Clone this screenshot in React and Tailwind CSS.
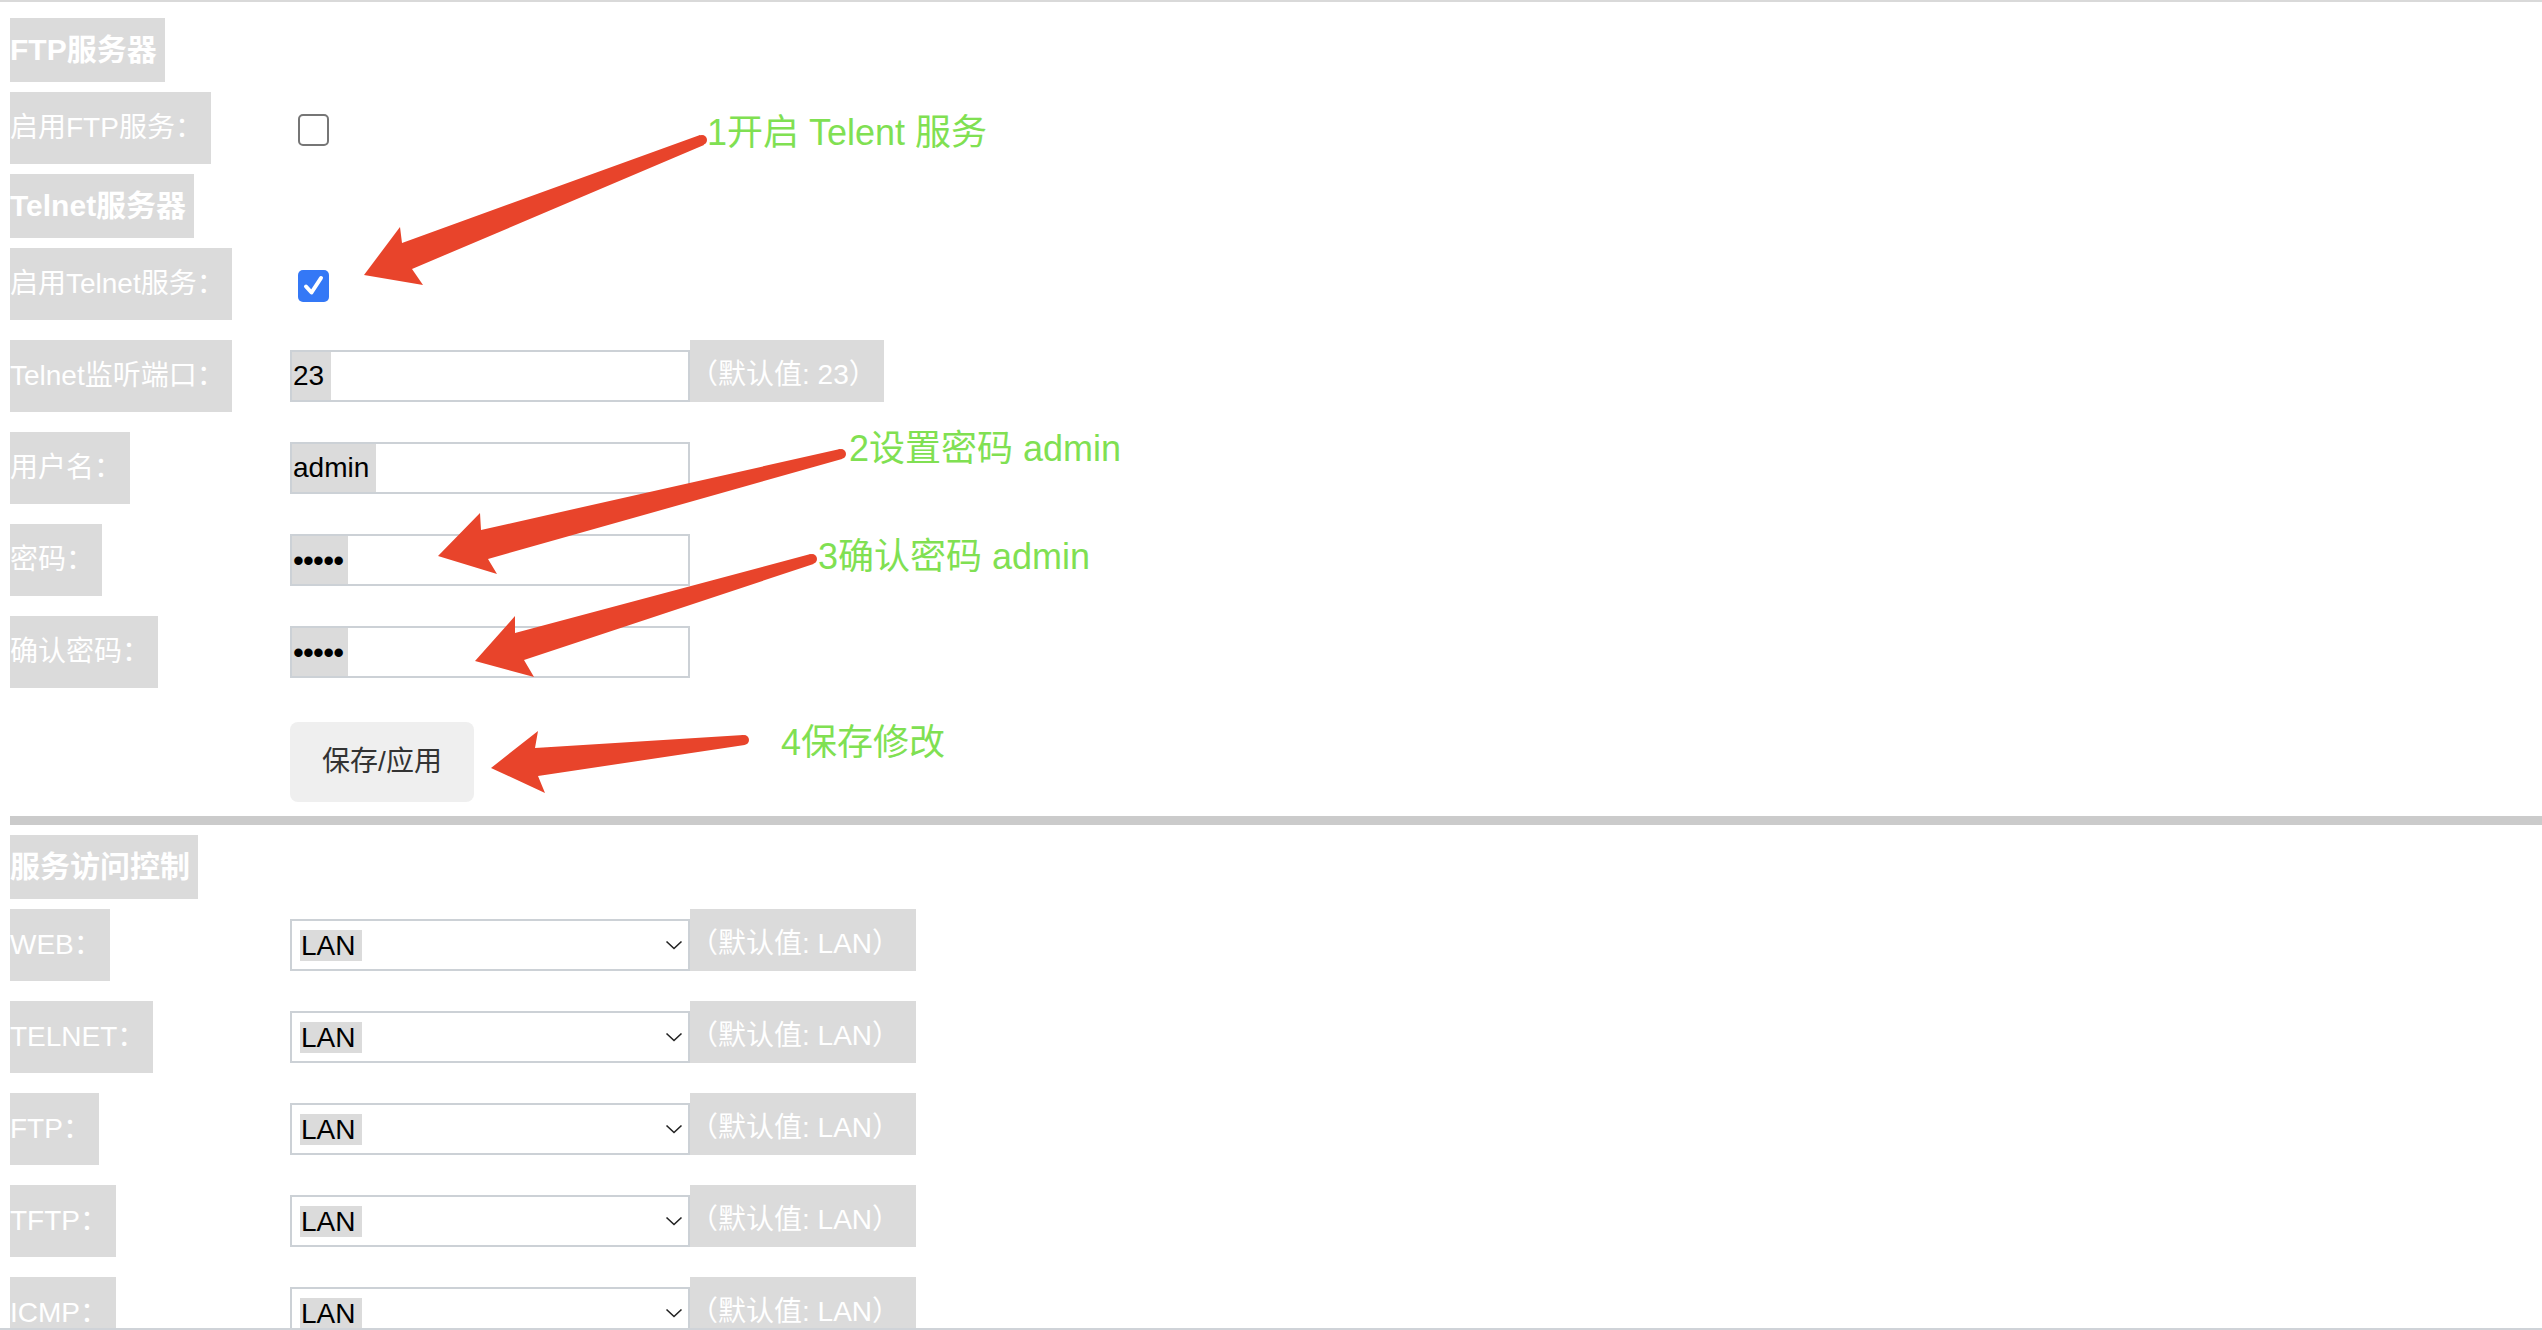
import React from "react";

// 页面字体：拉丁字母用 Liberation Sans，中文用 Noto Sans CJK SC
const FONT = "font-['Liberation_Sans','Noto_Sans_CJK_SC',sans-serif]";

function Tag({ className = "", children }) {
  return (
    <div className={`flex items-center bg-[#dbdbdb] text-white whitespace-nowrap overflow-hidden ${className}`}>
      {children}
    </div>
  );
}

function Header({ className = "", children }) {
  return (
    <Tag className={`h-[64px] text-[30px] font-bold leading-none ${className}`}>{children}</Tag>
  );
}

function Row({ label, labelW, className = "", children }) {
  return (
    <div className={`flex items-start ${className}`}>
      <div className="w-[280px] shrink-0">
        <Tag className={`h-[72px] text-[28px] leading-none ${labelW}`}>{label}</Tag>
      </div>
      {children}
    </div>
  );
}

function Checkbox({ checked }) {
  if (checked) {
    return (
      <div className="w-[31px] h-[32px] rounded-[5px] bg-[#3478f6] flex items-center justify-center">
        <svg width="31" height="32" viewBox="0 0 31 32">
          <polyline points="8,16.5 13.5,22.5 23,8" fill="none" stroke="white" strokeWidth="4" strokeLinecap="round" strokeLinejoin="round" />
        </svg>
      </div>
    );
  }
  return <div className="w-[31px] h-[32px] rounded-[5px] border-2 border-[#767676] bg-white" />;
}

function TextField({ value, valueW, hint, hintW, masked }) {
  return (
    <div className="h-[62px] flex items-end">
      <div className="w-[400px] h-[52px] border-2 border-[#ccd1d6] bg-white flex items-stretch">
        {masked ? (
          <span className={`bg-[#dbdbdb] text-black text-[31px] tracking-[-0.8px] leading-none flex items-center pl-[1px] ${valueW}`}>
            {value}
          </span>
        ) : (
          <span className={`bg-[#dbdbdb] text-black text-[28px] leading-none flex items-center pl-[1px] ${valueW}`}>
            {value}
          </span>
        )}
      </div>
      {hint && <Tag className={`h-[62px] pt-[8px] text-[28px] leading-none ${hintW}`}>{hint}</Tag>}
    </div>
  );
}

function SelectField() {
  return (
    <div className="flex items-end">
      <div className="w-[400px] h-[52px] border-2 border-[#ccd1d6] bg-white flex items-center justify-between pl-[8px] pr-[5px]">
        <span className="bg-[#dbdbdb] text-black text-[28px] leading-[31px] pl-[1px] w-[62px]">LAN</span>
        <svg width="18" height="10" viewBox="0 0 18 10">
          <polyline points="1.5,1.5 9,8.5 16.5,1.5" fill="none" stroke="#222" strokeWidth="1.6" />
        </svg>
      </div>
      <Tag className="h-[62px] pt-[8px] w-[226px] text-[28px] leading-none">（默认值: LAN）</Tag>
    </div>
  );
}

const access = [
  { label: "WEB：", w: "w-[100px]" },
  { label: "TELNET：", w: "w-[143px]" },
  { label: "FTP：", w: "w-[89px]" },
  { label: "TFTP：", w: "w-[106px]" },
  { label: "ICMP：", w: "w-[106px]" },
];

// 标注箭头（截图上的红色箭头）
const arrows = [
  { pts: "700,135 402,243 400,227 364,275 423,285 412,269 704,145", cx: 702, cy: 140 },
  { pts: "840,449 481,530 480,513 438,556 497,574 488,559 842,459", cx: 841, cy: 454 },
  { pts: "810.5,554 515,633 515,616 475,661 534,677 524,660 813.5,564", cx: 812, cy: 559 },
  { pts: "743.4,735 535,748 538,731 491,768 545,793 538,776 744.6,745", cx: 744, cy: 740 },
];

export default function App() {
  return (
    <div className={`relative h-[1330px] overflow-hidden bg-white border-t-2 border-b-2 border-t-[#d9d9d9] border-b-[#cfd3d8] ${FONT}`}>
      <div className="pl-[10px]">
        {/* FTP */}
        <Header className="mt-[16px] w-[155px]">FTP服务器</Header>
        <Row label="启用FTP服务：" labelW="w-[201px]" className="mt-[10px]">
          <div className="pt-[22px] pl-[8px]">
            <Checkbox checked={false} />
          </div>
        </Row>

        {/* Telnet */}
        <Header className="mt-[10px] w-[184px]">Telnet服务器</Header>
        <Row label="启用Telnet服务：" labelW="w-[222px]" className="mt-[10px]">
          <div className="pt-[22px] pl-[8px]">
            <Checkbox checked />
          </div>
        </Row>
        <Row label="Telnet监听端口：" labelW="w-[222px]" className="mt-[20px]">
          <TextField value="23" valueW="w-[39px]" hint="（默认值: 23）" hintW="w-[194px]" />
        </Row>
        <Row label="用户名：" labelW="w-[120px]" className="mt-[20px]">
          <TextField value="admin" valueW="w-[84px]" />
        </Row>
        <Row label="密码：" labelW="w-[92px]" className="mt-[20px]">
          <TextField value="•••••" valueW="w-[56px]" masked />
        </Row>
        <Row label="确认密码：" labelW="w-[148px]" className="mt-[20px]">
          <TextField value="•••••" valueW="w-[56px]" masked />
        </Row>

        <div className="mt-[34px] pl-[280px]">
          <button className="w-[184px] h-[80px] rounded-[8px] bg-[#efefef] text-[#333] text-[28px] leading-none">
            保存/应用
          </button>
        </div>

        <div className="mt-[14px] h-[9px] bg-[#cbcbcb]" />

        {/* 服务访问控制 */}
        <Header className="mt-[10px] w-[188px]">服务访问控制</Header>
        {access.map((a, i) => (
          <Row key={a.label} label={a.label} labelW={a.w} className={i === 0 ? "mt-[10px]" : "mt-[20px]"}>
            <SelectField />
          </Row>
        ))}
      </div>

      {/* 标注层 */}
      <div className="absolute left-0 top-[-2px] w-[2542px] h-[1330px] pointer-events-none">
        <svg width="2542" height="1330" className="absolute left-0 top-0">
          {arrows.map((a, i) => (
            <g key={i} fill="#e8442b">
              <polygon points={a.pts} />
              <circle cx={a.cx} cy={a.cy} r="5" />
            </g>
          ))}
        </svg>
        <div className="absolute left-[707px] top-[115px] text-[36px] leading-none text-[#80e052] whitespace-nowrap">1开启 Telent 服务</div>
        <div className="absolute left-[849px] top-[431px] text-[36px] leading-none text-[#80e052] whitespace-nowrap">2设置密码 admin</div>
        <div className="absolute left-[818px] top-[539px] text-[36px] leading-none text-[#80e052] whitespace-nowrap">3确认密码 admin</div>
        <div className="absolute left-[781px] top-[725px] text-[36px] leading-none text-[#80e052] whitespace-nowrap">4保存修改</div>
      </div>
    </div>
  );
}
